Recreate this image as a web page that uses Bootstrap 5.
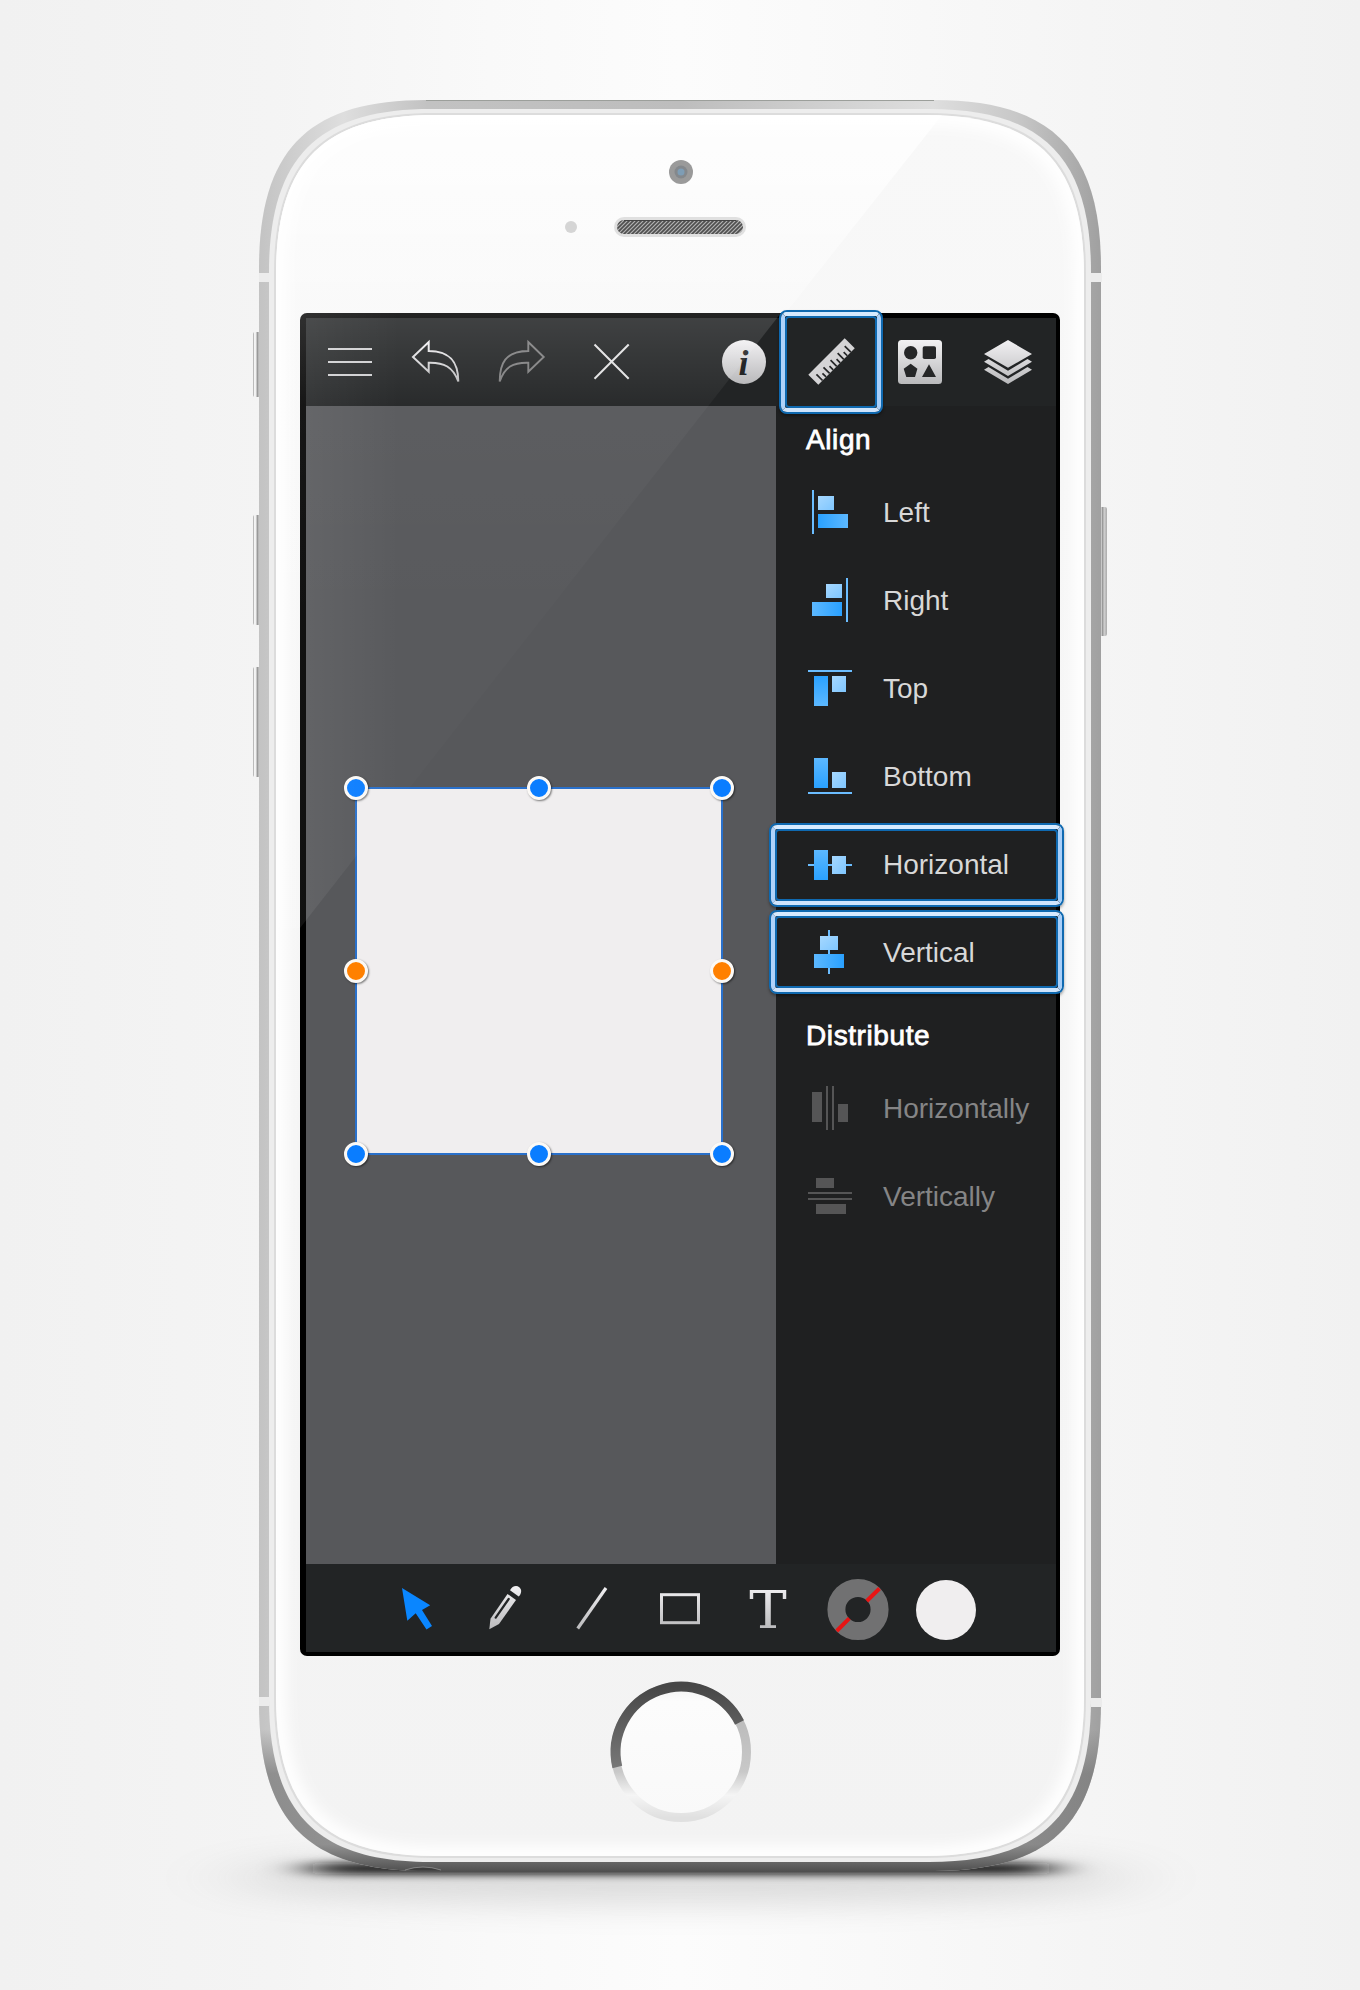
<!DOCTYPE html>
<html lang="en">
<head>
<meta charset="utf-8">
<meta name="viewport" content="width=device-width, initial-scale=1">
<title>Align panel</title>
<link href="https://cdn.jsdelivr.net/npm/bootstrap@5.3.0/dist/css/bootstrap.min.css" rel="stylesheet">
<style>
body{margin:0;font-family:"Liberation Sans",Arial,sans-serif;background:#fff}
.stage{width:1360px;height:1990px;padding:313px 0 0 300px;background:linear-gradient(90deg,#f1f1f1 0,#f4f4f4 20%,#f9f9f9 36%,#fcfcfc 50%,#f9f9f9 64%,#f5f5f5 80%,#f1f1f1 100%)}
.phone-body,.glare{left:0;top:0;pointer-events:none}
.device-screen{width:760px;height:1343px;border:solid #000;border-width:5px 4px 4px 6px;border-radius:7px;background:#1f2021}
.topbar,.toolbar-bottom{height:88px;background:#222425}
.cell{width:88px;height:88px;padding:0;border:0;background:none;flex:none}
.cell svg,.ico{display:block;overflow:visible}
.canvas-area{width:470px;background:#57585b;padding:382px 0 0 50px}
.artwork{width:366px;height:366px;background:#f0eeef;outline:2px solid #2a70ca;outline-offset:-1px}
.knob{width:24px;height:24px;border-radius:50%;background:#0a7dff;border:3px solid #fbf9f6;box-shadow:1px 1px 2px rgba(0,0,0,.5);transform:translate(-50%,-50%)}
.knob-side{background:#ff8000}
.side-panel{width:280px;background:#1f2021}
.panel-title{height:62px;margin:0;padding:6px 0 0 30px;font-size:28px;font-weight:400;line-height:56px;color:#fff;letter-spacing:.6px;-webkit-text-stroke:.8px #fff}
.panel-title.second{height:68px;padding-top:12px}
.panel-item{height:88px;padding-left:32px;gap:31px;font-size:28px;line-height:1;color:#d8d8d8}
.panel-item span{padding-top:1px}
.panel-item.off{color:#858586}
.hilite{border:2px solid #0f69b0;border-radius:8px;left:-7px;width:295px;height:84px;box-shadow:0 2px 3px rgba(0,0,0,.35);z-index:5;pointer-events:none}
.hilite::before{content:"";position:absolute;inset:0;border:4px solid;border-color:#d6eaff #a9cff9 #cfe4fc #b0d3fa;border-radius:6px}
.hilite::after{content:"";position:absolute;inset:4px;border:2px solid #0f69b0;border-radius:4px}
.h-row{top:3px}.v-row{top:2px}
.h-tool{left:-9px;top:-8px;width:104px;height:104px}
</style>
<script src="https://cdn.jsdelivr.net/npm/bootstrap@5.3.0/dist/js/bootstrap.bundle.min.js"></script>
</head>
<body>
<div class="stage position-relative overflow-hidden">
<svg class="phone-body position-absolute" width="1360" height="1990" viewBox="0 0 1360 1990" aria-hidden="true">
<defs>
<linearGradient id="metal" x1="0" y1="0" x2="1" y2="0"><stop offset="0" stop-color="#c3c3c3"/><stop offset=".1" stop-color="#dedede"/><stop offset=".2" stop-color="#c2c2c2"/><stop offset=".5" stop-color="#bdbdbd"/><stop offset=".8" stop-color="#dedede"/><stop offset=".9" stop-color="#c8c8c8"/><stop offset="1" stop-color="#a0a0a0"/></linearGradient>
<linearGradient id="metalV" x1="0" y1="0" x2="0" y2="1"><stop offset=".92" stop-color="#777" stop-opacity="0"/><stop offset=".945" stop-color="#777" stop-opacity=".7"/><stop offset=".985" stop-color="#777" stop-opacity=".75"/><stop offset="1" stop-color="#505050"/></linearGradient>
<linearGradient id="face" x1="0" y1="0" x2="0" y2="1"><stop offset="0" stop-color="#f8f8f8"/><stop offset="1" stop-color="#f3f3f3"/></linearGradient>
<linearGradient id="faceGlow" x1="0" y1="0" x2="0" y2="1"><stop offset="0" stop-color="#fff" stop-opacity=".85"/><stop offset=".25" stop-color="#fff" stop-opacity=".25"/><stop offset="1" stop-color="#fff" stop-opacity=".1"/></linearGradient>
<linearGradient id="knobL" x1="0" y1="0" x2="1" y2="0"><stop offset="0" stop-color="#999"/><stop offset=".15" stop-color="#f4f4f4"/><stop offset=".35" stop-color="#eee"/><stop offset=".45" stop-color="#8c8c8c"/><stop offset=".7" stop-color="#cfcfcf"/><stop offset="1" stop-color="#aaa"/></linearGradient>
<linearGradient id="ringD" x1="0" y1="0" x2="0" y2="1"><stop offset="0" stop-color="#474747"/><stop offset="1" stop-color="#777"/></linearGradient>
<linearGradient id="ringL" x1="0" y1="0" x2="0" y2="1"><stop offset=".3" stop-color="#bdbdbd"/><stop offset=".65" stop-color="#c8c8c8"/><stop offset=".83" stop-color="#f5f5f5"/><stop offset="1" stop-color="#e0e0e0"/></linearGradient>
<linearGradient id="homeFill" x1="0" y1="0" x2="0" y2="1"><stop offset="0" stop-color="#f3f3f3"/><stop offset=".12" stop-color="#fcfcfc"/><stop offset="1" stop-color="#f9f9f9"/></linearGradient>
<pattern id="mesh" width="4" height="4" patternUnits="userSpaceOnUse"><rect width="4" height="4" fill="#4f4f4f"/><path d="M-1 5L5 -1M-1 1L1 -1M3 5L5 3" stroke="#b2b2b2" stroke-width="1.2"/></pattern>
<filter id="b3" x="-20%" y="-400%" width="140%" height="900%"><feGaussianBlur stdDeviation="24 4"/></filter>
<filter id="b20" x="-20%" y="-100%" width="140%" height="300%"><feGaussianBlur stdDeviation="44 16"/></filter>
<filter id="b8"><feGaussianBlur stdDeviation="7"/></filter>
<clipPath id="faceClip"><path d="M276 275C276 160 325 115 436 115H924C1035 115 1084 160 1084 275V1696C1084 1811 1035 1856 924 1856H436C325 1856 276 1811 276 1696Z"/></clipPath>
</defs>
<ellipse cx="681" cy="1878" rx="450" ry="26" fill="#777" opacity=".24" filter="url(#b20)"/>
<rect x="312" y="1863" width="738" height="11" rx="5" fill="#111" filter="url(#b3)"/>
<g fill="url(#knobL)"><rect x="253" y="332" width="9" height="65" rx="2"/><rect x="253" y="515" width="9" height="110" rx="2"/><rect x="253" y="667" width="9" height="110" rx="2"/><rect x="1098" y="507" width="9" height="129" rx="2"/></g>
<path fill="url(#metal)" d="M259 268C259 149 309 100 426 100H934C1051 100 1101 149 1101 268V1703C1101 1822 1051 1871 934 1871H426C309 1871 259 1822 259 1703Z"/>
<path fill="url(#metalV)" d="M259 268C259 149 309 100 426 100H934C1051 100 1101 149 1101 268V1703C1101 1822 1051 1871 934 1871H426C309 1871 259 1822 259 1703Z"/>
<path d="M426 100.500H934" fill="none" stroke="#9c9f9b"/>
<g fill="#ececec"><rect x="259" y="273" width="10" height="9"/><rect x="259" y="1697" width="10" height="9"/><rect x="1091" y="273" width="11" height="9"/><rect x="1091" y="1698" width="11" height="9"/></g>
<path d="M405 1870.500Q423 1864 441 1870.500Z" fill="#3c3c3c"/><path d="M405 1870Q423 1864 441 1870" fill="none" stroke="#999" stroke-width=".7"/>
<path fill="#ededed" d="M269 272C269 155 320 109 431 109H929C1040 109 1091 155 1091 272V1699C1091 1816 1040 1862 929 1862H431C320 1862 269 1816 269 1699Z"/>
<path fill="#dcdcdc" d="M274 274C274 159 324 113 434 113H926C1036 113 1086 159 1086 274V1698C1086 1812 1036 1858 926 1858H434C324 1858 274 1812 274 1698Z"/>
<g clip-path="url(#faceClip)"><rect x="276" y="115" width="808" height="1741" fill="url(#face)"/>
<path d="M276 115H942L300 928H276Z" fill="url(#faceGlow)"/>
<path fill="none" stroke="#fff" stroke-width="20" filter="url(#b8)" d="M276 275C276 160 325 115 436 115H924C1035 115 1084 160 1084 275V1696C1084 1811 1035 1856 924 1856H436C325 1856 276 1811 276 1696Z"/></g>
<circle cx="681" cy="172" r="12" fill="#9a9a9a"/><circle cx="681" cy="172" r="6.500" fill="#84888c"/><circle cx="681" cy="172" r="3.500" fill="#7e9db5"/>
<circle cx="571" cy="227" r="6" fill="#d5d5d5"/>
<rect x="614" y="217" width="132" height="20" rx="10" fill="#e0e0e0"/><rect x="617" y="220" width="126" height="14" rx="7" fill="url(#mesh)"/><path d="M624 220.500H736" stroke="#444"/>
<circle cx="681" cy="1752" r="66" fill="url(#homeFill)"/>
<circle cx="681" cy="1752" r="65.500" fill="none" stroke="url(#ringL)" stroke-width="9"/>
<path d="M617.300 1767A65.500 65.500 0 0 1 739.500 1722.500" fill="none" stroke="url(#ringD)" stroke-width="10"/>
</svg>

<div class="device-screen position-relative d-flex flex-column">
<svg width="0" height="0" class="position-absolute" aria-hidden="true"><defs>
<linearGradient id="sv" gradientUnits="userSpaceOnUse" x1="0" y1="22" x2="0" y2="66"><stop offset="0" stop-color="#f2f1f3"/><stop offset="1" stop-color="#b9b9bb"/></linearGradient>
<linearGradient id="hB" x1="0" y1="0" x2="1" y2="0"><stop offset="0" stop-color="#5cb8ff"/><stop offset="1" stop-color="#2aa1ff"/></linearGradient>
<linearGradient id="hBr" x1="1" y1="0" x2="0" y2="0"><stop offset="0" stop-color="#5cb8ff"/><stop offset="1" stop-color="#2aa1ff"/></linearGradient>
<linearGradient id="vB" x1="0" y1="0" x2="0" y2="1"><stop offset="0" stop-color="#5cb8ff"/><stop offset="1" stop-color="#2aa1ff"/></linearGradient>
<linearGradient id="vBr" x1="0" y1="1" x2="0" y2="0"><stop offset="0" stop-color="#5cb8ff"/><stop offset="1" stop-color="#2aa1ff"/></linearGradient>
<linearGradient id="sB" x1="0" y1="0" x2="1" y2="1"><stop offset="0" stop-color="#a6d8ff"/><stop offset="1" stop-color="#7fc6ff"/></linearGradient>
</defs></svg>
<nav class="topbar d-flex align-items-center">
<button class="cell" aria-label="Menu"><svg width="88" height="88" fill="#cfcfd1"><path d="M22 30h44v2H22zM22 43h44v2H22zM22 56h44v2H22z"/></svg></button>
<button class="cell" aria-label="Undo"><svg width="88" height="88" fill="none" stroke="url(#sv)" stroke-width="2"><path d="M19 39L34.700 24V33C58 33 64.300 46 64.300 63.500C59 49 50 44.300 34.700 44.700V53.700Z"/></svg></button>
<button class="cell" aria-label="Redo"><svg width="88" height="88" fill="none" stroke="#808081" stroke-width="1.900"><path d="M61.700 39L46.300 24V33C23 33 17.700 46 17.700 63.500C22.500 49 31 44.300 46.300 44.700V53.700Z"/></svg></button>
<button class="cell" aria-label="Close"><svg width="88" height="88" fill="none" stroke="#e2e2e3" stroke-width="2"><path d="M24.500 26.500L58.700 60.700M58.700 26.500L24.500 60.700"/></svg></button>
<div class="d-flex ms-auto">
<button class="cell" aria-label="Info"><svg width="88" height="88"><circle cx="44" cy="44" r="22" fill="url(#sv)"/><text x="43.500" y="56.500" text-anchor="middle" font-family="Liberation Serif, serif" font-style="italic" font-weight="700" font-size="36" fill="#252627">i</text></svg></button>
<button class="cell position-relative" aria-label="Align tools"><svg width="88" height="88"><g transform="translate(20.300 56.700) rotate(-45)"><path fill="#d5d4d6" d="M0 0H51.500V14.200H0Z"/><path stroke="#252627" stroke-width="1.700" d="M6 14.200V5.500M11 14.200V9M16 14.200V5.500M21 14.200V9M26 14.200V5.500M31 14.200V9M36 14.200V5.500M41 14.200V9M46 14.200V5.500"/></g></svg><span class="hilite h-tool position-absolute"></span></button>
<button class="cell" aria-label="Shapes"><svg width="88" height="88"><rect x="22" y="22" width="44" height="44" rx="3.500" fill="url(#sv)"/><g fill="#252627"><circle cx="34.700" cy="34.700" r="6.700"/><rect x="46.700" y="28.300" width="13.300" height="12.700" rx="1.800"/><path d="M34.700 45.700L41.400 50.800L39 59H30.300L27.700 50.800ZM53 46.300L60 59H46Z"/></g></svg></button>
<button class="cell me-1" aria-label="Layers"><svg width="88" height="88" fill="url(#sv)"><path d="M44 22L68 36L44 49.700L20 36ZM24.500 41L20 43.700L44 58L68 43.700L63.500 41L44 52.700ZM24.500 49L20 51.700L44 66L68 51.700L63.500 49L44 60.700Z"/></svg></button>
</div>
</nav>

<main class="d-flex flex-grow-1">
<section class="canvas-area">
<div class="artwork position-relative">
<i class="knob position-absolute" style="left:0%;top:0%"></i><i class="knob position-absolute" style="left:50%;top:0%"></i><i class="knob position-absolute" style="left:100%;top:0%"></i>
<i class="knob knob-side position-absolute" style="left:0%;top:50%"></i><i class="knob knob-side position-absolute" style="left:100%;top:50%"></i>
<i class="knob position-absolute" style="left:0%;top:100%"></i><i class="knob position-absolute" style="left:50%;top:100%"></i><i class="knob position-absolute" style="left:100%;top:100%"></i>
</div>
</section>
<aside class="side-panel">
<h2 class="panel-title">Align</h2>
<div class="panel-item d-flex align-items-center"><svg class="ico" width="44" height="44"><path fill="#6bbdff" d="M4 0h2v44h-2z"/><rect x="10" y="6" width="16" height="14" fill="url(#sB)"/><rect x="10" y="24" width="30" height="14" fill="url(#hBr)"/></svg><span>Left</span></div>
<div class="panel-item d-flex align-items-center"><svg class="ico" width="44" height="44"><path fill="#6bbdff" d="M38 0h2v44h-2z"/><rect x="18" y="6" width="16" height="14" fill="url(#sB)"/><rect x="4" y="24" width="30" height="14" fill="url(#hB)"/></svg><span>Right</span></div>
<div class="panel-item d-flex align-items-center"><svg class="ico" width="44" height="44"><path fill="#6bbdff" d="M0 4h44v2H0z"/><rect x="6" y="10" width="14" height="30" fill="url(#vBr)"/><rect x="24" y="10" width="14" height="16" fill="url(#sB)"/></svg><span>Top</span></div>
<div class="panel-item d-flex align-items-center"><svg class="ico" width="44" height="44"><path fill="#6bbdff" d="M0 38h44v2H0z"/><rect x="6" y="4" width="14" height="30" fill="url(#vB)"/><rect x="24" y="18" width="14" height="16" fill="url(#sB)"/></svg><span>Bottom</span></div>
<div class="panel-item d-flex align-items-center position-relative"><svg class="ico" width="44" height="44"><path fill="#6bbdff" d="M0 22h44v2H0z"/><rect x="6" y="8" width="14" height="30" fill="url(#vB)"/><rect x="24" y="14" width="14" height="18" fill="url(#sB)"/></svg><span>Horizontal</span><b class="hilite h-row position-absolute"></b></div>
<div class="panel-item d-flex align-items-center position-relative"><svg class="ico" width="44" height="44"><path fill="#6bbdff" d="M20 0h2v44h-2z"/><rect x="12" y="6" width="18" height="14" fill="url(#sB)"/><rect x="6" y="24" width="30" height="14" fill="url(#hB)"/></svg><span>Vertical</span><b class="hilite v-row position-absolute"></b></div>
<h2 class="panel-title second">Distribute</h2>
<div class="panel-item off d-flex align-items-center"><svg class="ico" width="44" height="44" fill="#555556"><path d="M4 6h10v30H4zM18 0h2v44h-2zM24 0h2v44h-2zM30 18h10v18H30z"/></svg><span>Horizontally</span></div>
<div class="panel-item off d-flex align-items-center"><svg class="ico" width="44" height="44" fill="#555556"><path d="M8 4h18v10H8zM0 18h44v2H0zM0 24h44v2H0zM8 30h30v10H8z"/></svg><span>Vertically</span></div>
</aside>
</main>

<footer class="toolbar-bottom d-flex justify-content-center">
<button class="cell" aria-label="Select"><svg width="88" height="88"><path fill="#0a86ff" d="M29 24L57.200 41.300L49 46L59 62L53.500 65.500L42.700 49.300L34.300 56.800Z"/></svg></button>
<button class="cell" aria-label="Pencil"><svg width="88" height="88" fill="url(#sv)"><path d="M46.500 30L55 36L38 60L28.300 65.300L29.500 54.800Z"/><path d="M49 26.300C51 22 55.500 20.800 58.300 23.200C61 25.300 60.800 29.500 57.700 32.500Z"/><path d="M47.700 35L34.700 53.700" stroke="#222425" stroke-width="2.200" stroke-linecap="round"/></svg></button>
<button class="cell" aria-label="Line"><svg width="88" height="88"><path d="M57 24L28.700 64.500" stroke="url(#sv)" stroke-width="3.200"/></svg></button>
<button class="cell" aria-label="Rectangle"><svg width="88" height="88"><rect x="24.500" y="30.700" width="37" height="28" fill="none" stroke="url(#sv)" stroke-width="3"/></svg></button>
<button class="cell" aria-label="Text"><svg width="88" height="88"><text x="24.300" y="64" textLength="37.500" lengthAdjust="spacingAndGlyphs" font-family="DejaVu Serif, serif" font-size="52" fill="url(#sv)">T</text></svg></button>
<button class="cell" aria-label="Stroke color"><svg width="88" height="88"><circle cx="45" cy="45.500" r="21.600" fill="none" stroke="#717172" stroke-width="18"/><path d="M23.700 67L36.300 54.300M53.800 37L66.500 24.500" stroke="#e81414" stroke-width="4"/></svg></button>
<button class="cell" aria-label="Fill color"><svg width="88" height="88"><circle cx="45" cy="46" r="30" fill="#f0eeef"/></svg></button>
</footer>
</div>

<svg class="glare position-absolute" width="1360" height="1990" viewBox="0 0 1360 1990" aria-hidden="true">
<defs><linearGradient id="g1" gradientUnits="userSpaceOnUse" x1="0" y1="313" x2="0" y2="928"><stop offset="0" stop-color="#fff" stop-opacity=".14"/><stop offset=".15" stop-color="#fff" stop-opacity=".032"/><stop offset=".5" stop-color="#fff" stop-opacity=".012"/><stop offset="1" stop-color="#fff" stop-opacity=".012"/></linearGradient>
<linearGradient id="g2" gradientUnits="userSpaceOnUse" x1="300" y1="0" x2="400" y2="0"><stop offset="0" stop-color="#fff" stop-opacity=".06"/><stop offset="1" stop-color="#fff" stop-opacity="0"/></linearGradient></defs>
<path fill="url(#g1)" d="M307 313H781L300 928V320Q300 313 307 313Z"/>
<path fill="url(#g2)" d="M307 313H400V800L300 928V320Q300 313 307 313Z"/>
</svg>
</div>
</body>
</html>
